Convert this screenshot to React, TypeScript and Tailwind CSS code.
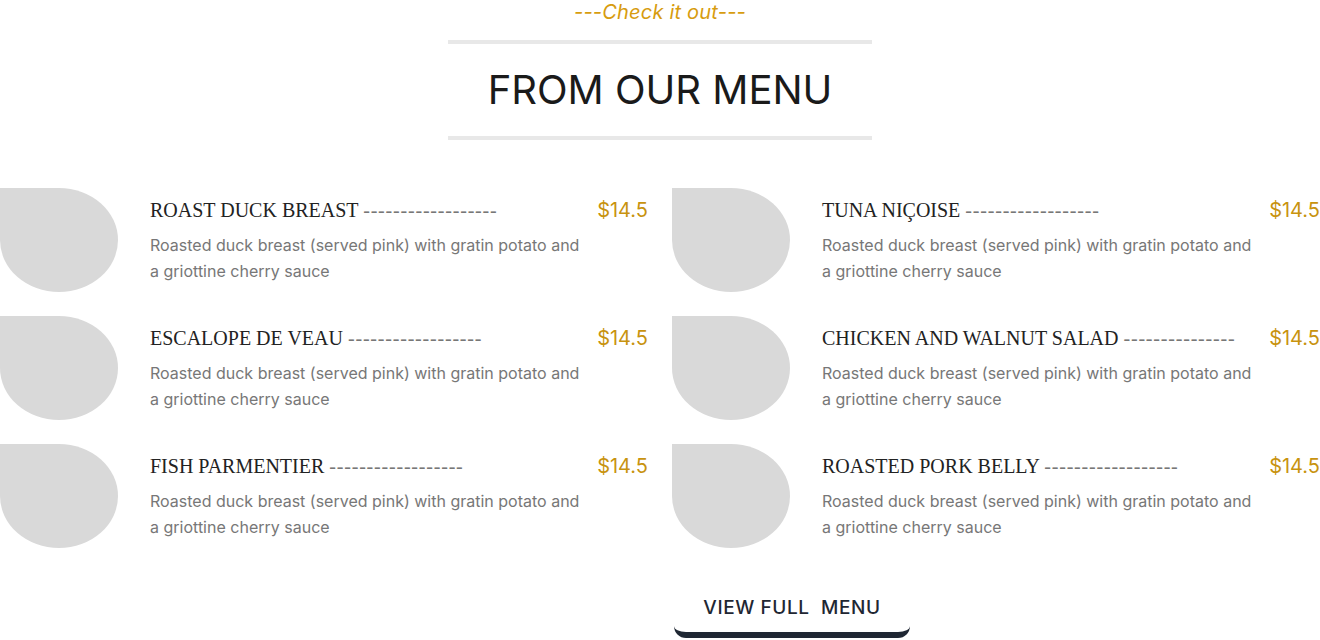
import React from "react";

const items = [
  { name: "ROAST DUCK BREAST", dashes: "------------------" },
  { name: "TUNA NIÇOISE", dashes: "------------------" },
  { name: "ESCALOPE DE VEAU", dashes: "------------------" },
  { name: "CHICKEN AND WALNUT SALAD", dashes: "---------------" },
  { name: "FISH PARMENTIER", dashes: "------------------" },
  { name: "ROASTED PORK BELLY", dashes: "------------------" },
];

export default function App() {
  return (
    <div className="w-[1320px] bg-white font-['Inter',sans-serif]">
      <div className="flex flex-col items-center">
        <p className="text-[20px] leading-[24px] italic text-[#d79c0f] tracking-[0.2px]">---Check it out---</p>
        <div className="mt-4 w-[424px] border-y-4 border-[#e8e8e8] py-[21px] text-center">
          <h2 className="text-[40px] leading-[50px] text-[#1a1a1a]">FROM OUR MENU</h2>
        </div>
      </div>
      <div className="mt-12 grid grid-cols-2 gap-x-6 gap-y-6">
        {items.map((it) => (
          <div key={it.name} className="flex gap-8">
            <div className="h-[104px] w-[118px] shrink-0 rounded-[0_50%_50%_50%] bg-[#d9d9d9]" />
            <div className="flex-1 pt-[8px]">
              <div className="flex items-center justify-between">
                <h3 className="font-['Liberation_Serif',serif] text-[20px] leading-[28px] text-[#222]">
                  {it.name} <span className="tracking-[0.8px] text-[#777]">{it.dashes}</span>
                </h3>
                <span className="text-[20px] leading-[28px] text-[#c8930f]">$14.5</span>
              </div>
              <p className="mt-[8px] w-[440px] text-[16px] leading-[26px] text-[#777]">
                Roasted duck breast (served pink) with gratin potato and a griottine cherry sauce
              </p>
            </div>
          </div>
        ))}
      </div>
      <div className="mt-8 flex pl-[674px]">
        <button className="w-[236px] rounded-b-xl border-b-[6px] border-[#1f2733] pt-[14px] pb-[10px] text-center text-[19px] leading-[28px] font-medium tracking-[0.6px] text-[#1f2733] whitespace-pre">
          VIEW FULL  MENU
        </button>
      </div>
    </div>
  );
}
